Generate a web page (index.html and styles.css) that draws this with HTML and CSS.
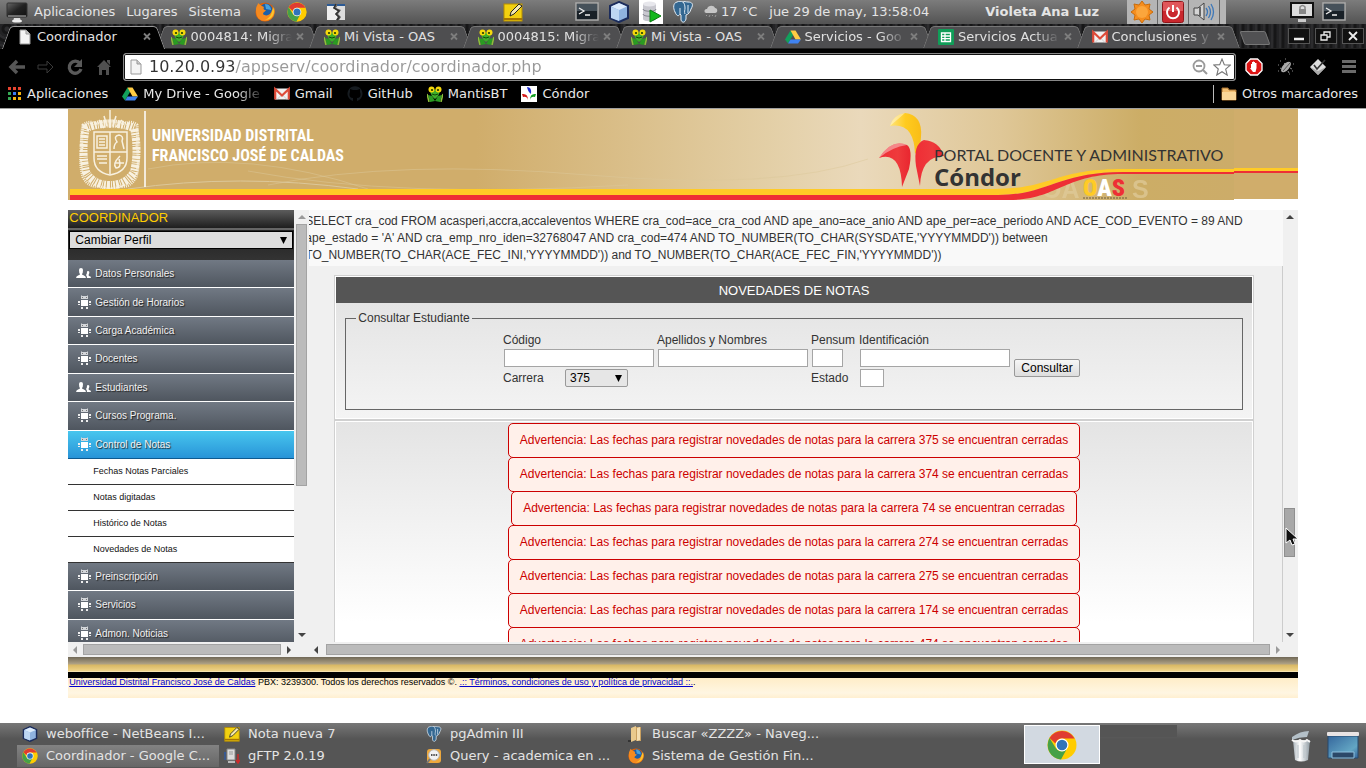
FILE: index.html
```html
<!DOCTYPE html>
<html lang="es">
<head>
<meta charset="utf-8">
<title>Coordinador</title>
<link rel="stylesheet" href="styles.css">
</head>
<body>
<svg class="defs" aria-hidden="true">
  <defs>
    <linearGradient id="scr" x1="0" y1="0" x2="1" y2="1"><stop offset="0" stop-color="#666"/><stop offset=".5" stop-color="#222"/><stop offset="1" stop-color="#111"/></linearGradient>
    <linearGradient id="banner" x1="0" y1="0" x2="1" y2="0"><stop offset="0" stop-color="#d0ad6b"/><stop offset=".35" stop-color="#d0ad6b"/><stop offset=".6" stop-color="#e3cfa6"/><stop offset=".68" stop-color="#ead9bb"/><stop offset=".8" stop-color="#dfc797"/><stop offset=".92" stop-color="#ccad66"/><stop offset="1" stop-color="#ccac69"/></linearGradient>
    <linearGradient id="petalY" x1="0" y1="0" x2="1" y2="0"><stop offset="0" stop-color="#ffe47a"/><stop offset=".5" stop-color="#ffcb1f"/><stop offset="1" stop-color="#f9bd17"/></linearGradient>
    <linearGradient id="petalR" x1="0" y1="0" x2="1" y2="0"><stop offset="0" stop-color="#ef2d35"/><stop offset=".6" stop-color="#ee3a3c"/><stop offset="1" stop-color="#e9262f"/></linearGradient>
    <linearGradient id="glass" x1="0" y1="0" x2="1" y2="1"><stop offset="0" stop-color="#35669c"/><stop offset=".7" stop-color="#63a6c4"/><stop offset="1" stop-color="#35669c"/></linearGradient>
    <linearGradient id="metal" x1="0" y1="0" x2="1" y2="0"><stop offset="0" stop-color="#aab4bb"/><stop offset=".4" stop-color="#fff"/><stop offset="1" stop-color="#8f9ba3"/></linearGradient>
  </defs>
  <symbol id="i-desk" viewBox="0 0 22 22"><rect x="1" y="2" width="20" height="14" rx="1" fill="url(#scr)" stroke="#333"/><path d="M2 15h18" stroke="#bbb"/><path d="M8 17h6l1 3H7z" fill="#ddd"/><ellipse cx="11" cy="20" rx="5" ry="1.5" fill="#eee"/></symbol>
  <symbol id="i-firefox" viewBox="0 0 20 20"><circle cx="10" cy="10" r="9.5" fill="#e66000"/><circle cx="11" cy="8" r="6.500" fill="#1d5fa8"/><path d="M10 2c4 0 6 3 6 6l-5-1z" fill="#48a0da"/><path d="M1 8C1 4 3 3 3 1c2 2 4 3 6 4-1 2 0 3 2 3-1 2-3 2-3 4 3 3 8 1 9-4 2-1 2-3 1-4 4 5 1 15-8 15C4 19 1 15 1 8z" fill="#f58a1f"/><path d="M18 5c3 6-1 13-8 13 5-2 7-6 8-13z" fill="#fcc62b"/></symbol>
  <symbol id="i-chrome" viewBox="0 0 30 30"><circle cx="15" cy="15" r="14.500" fill="#fc0"/><path d="M2.500 8A14.500 14.500 0 0 1 27.600 8.500H15a7 7 0 0 0-6.500 5z" fill="#e03c31"/><path d="M2.500 8A14.500 14.500 0 0 0 14 29.500l6-11a7 7 0 0 1-11 0z" fill="#46a147"/><circle cx="15" cy="15" r="6.500" fill="#fff"/><circle cx="15" cy="15" r="5.300" fill="#2f74ba"/></symbol>
  <symbol id="i-split" viewBox="0 0 18 18"><path d="M0 2h8L6 5l5 3-3 3 3 3-2 3H0z" fill="#eee"/><path d="M11 2h7v15h-6l2-3-3-3 3-4-5-2z" fill="#ddd"/><path d="M0 1h8v2H0zM10 1h8v2h-8z" fill="#2c5a94"/><path d="M9 1L7 5l5 3-3 3 3 3-2 3" fill="none" stroke="#333" stroke-width="1.500"/></symbol>
  <symbol id="i-note" viewBox="0 0 20 20"><rect x="1" y="2" width="18" height="17" fill="#f2d00f" stroke="#b58d00"/><path d="M1 17h18" stroke="#a87600" stroke-width="2"/><path d="M7 14l1-4 8-8 3 2-8 8z" fill="#f5e9b0" stroke="#222"/></symbol>
  <symbol id="i-term" viewBox="0 0 24 20"><rect x="1" y="1" width="22" height="17" fill="#182027" stroke="#aaa" stroke-width="1.500"/><path d="M2 2h20v7H2z" fill="#46515a"/><path d="M4 6l5 3-5 3M10 13h5" fill="none" stroke="#eee" stroke-width="1.300"/></symbol>
  <symbol id="i-cube" viewBox="0 0 22 22"><path d="M11 1l9 4v12l-9 4-9-4V5z" fill="#8fb3e0" stroke="#1b2c5c" stroke-width="2"/><path d="M3 5.500L11 9l8-3.500L11 2z" fill="#dcebfb"/><path d="M3 6l8 3v11l-8-3z" fill="#bdd6f2"/></symbol>
  <symbol id="i-db" viewBox="0 0 24 24"><path fill="#fff" d="M0 0h24v24H0z"/><path d="M4 4v15c0 3 13 3 13 0V4z" fill="#c8c8cf"/><ellipse cx="10.500" cy="4" rx="6.500" ry="2.500" fill="#e7e7ec"/><path d="M4 9c0 3 13 3 13 0M4 14c0 3 13 3 13 0" stroke="#85858f" fill="none"/><path d="M11 10l11 6-11 6z" fill="#12b81c" stroke="#087a10"/></symbol>
  <symbol id="i-pg" viewBox="0 0 22 22"><path d="M5 1C1 2 1 7 3 11c2 5 4 4 5 2l1 1v5c1 3 4 3 5-1v-4c3-1 4-3 5-6 3-5 1-7-3-7-2 0-4-1-5 0C9 0 7 0 5 1z" fill="#336791" stroke="#e4edf5"/><path d="M8 13V7M13 13c-1-2 0-4 0-6 0-3-1-5-2-6M16 4v8" stroke="#dce8f2" fill="none"/></symbol>
  <symbol id="i-cloud" viewBox="0 0 14 14"><path d="M2 8a2 2 0 0 1 1-4c1-4 7-4 8-1 3 0 3 5 0 5z" fill="#c6c6c6"/><path d="M3 10l-1 1M6 10l-1 2M9 10l-1 1M12 10l-1 2" stroke="#999"/></symbol>
  <symbol id="i-sun" viewBox="0 0 22 22"><path d="M11 0l3 4 5-1-1 5 4 3-4 3 1 5-5-1-3 4-3-4-5 1 1-5-4-3 4-3-1-5 5 1z" fill="#f58d1d" stroke="#c96c0a"/><circle cx="11" cy="11" r="6" fill="#fba63c"/></symbol>
  <symbol id="i-power" viewBox="0 0 22 22"><rect x=".5" y=".5" width="21" height="21" rx="2" fill="#c9272d" stroke="#8e1519"/><path d="M1 1h20v9H1z" fill="#e0565a"/><path d="M7.500 6.500a6 6 0 1 0 7 0M11 4v7" fill="none" stroke="#fff" stroke-width="2"/></symbol>
  <symbol id="i-vol" viewBox="0 0 22 22"><path d="M1 7h4l6-5v17l-6-5H1z" fill="#d5d5d5" stroke="#444"/><path d="M7 6v9" stroke="#666" stroke-width="2"/><path d="M13 7q3 4 0 8M15.500 5q4 6 0 12M18 3q5 8 0 16" fill="none" stroke="#3d77b8" stroke-width="1.300"/></symbol>
  <symbol id="i-lock" viewBox="0 0 24 22"><rect x="1" y="2" width="22" height="14" fill="#ddd" stroke="#111" stroke-width="2"/><path d="M9 8h7v5H9z" fill="#888"/><path d="M10 8V6q2.500-3 5 0v2" fill="none" stroke="#888" stroke-width="1.500"/><path d="M8 18h8v3H8z" fill="#ccc"/></symbol>
  <symbol id="i-page" viewBox="0 0 12 16"><path d="M1 1h6l4 4v10H1z" fill="#f4f4f4" stroke="#999"/><path d="M7 1v4h4" fill="#ccc" stroke="#999"/></symbol>
  <symbol id="i-mantis" viewBox="0 0 16 16"><path d="M1 9l4 1 3 5-5 1zM15 9l-4 1-3 5 5 1z" fill="#2a9b22"/><path d="M3 5q5-3 10 0-1 5-5 8-4-3-5-8z" fill="#3fae2a"/><path d="M0 8l2 8M16 8l-2 8" stroke="#8fc03b" stroke-width="1.500"/><circle cx="4.500" cy="3.500" r="3" fill="#f6d90c"/><circle cx="11.500" cy="3.500" r="3" fill="#f6d90c"/><circle cx="5" cy="4" r="1.100" fill="#1d3a00"/><circle cx="11" cy="4" r="1.100" fill="#1d3a00"/><path d="M5 8q3 2 6 0" stroke="#0d4a0a" fill="none"/></symbol>
  <symbol id="i-drive" viewBox="0 0 16 15"><path d="M5.500 1L0 10l3 4 5.300-9z" fill="#12a05c"/><path d="M5.500 1h5l5.500 9h-5.500z" fill="#fc4"/><path d="M5.500 10H16l-3 4H3z" fill="#3f82f0"/></symbol>
  <symbol id="i-sheet" viewBox="0 0 16 16"><rect width="16" height="16" rx="1" fill="#109d58"/><path d="M3.500 4h9v8.500h-9zM3.500 7h9M3.500 9.700h9M7 4v8.500" fill="none" stroke="#fff" stroke-width="1.300"/></symbol>
  <symbol id="i-gmail" viewBox="0 0 16 13"><path fill="#f1f1f1" d="M1 1h14v11H1z"/><path d="M3 12l5-5 5 5" fill="none" stroke="#ccc"/><path d="M1.200 12V1.500L8 8l6.800-6.500V12" fill="none" stroke="#dd4b39" stroke-width="2.200"/></symbol>
  <symbol id="i-apps" viewBox="0 0 14 14"><path d="M0 0h3v3H0zM5 0h3v3H5zM10 0h3v3h-3z" fill="#e8442f"/><path d="M0 5h3v3H0z" fill="#35a853"/><path d="M5 5h3v3H5z" fill="#3c7cf0"/><path d="M10 5h3v3h-3zM5 10h3v3H5zM10 10h3v3h-3z" fill="#f6b50c"/><path d="M0 10h3v3H0z" fill="#35a853"/></symbol>
  <symbol id="i-github" viewBox="0 0 16 16"><path d="M6 15v-3C2 12 2 8 3 6l0-3 3 1h4l3-1v3c1 2 1 6-3 6v3a7.500 7.500 0 1 0-4 0z" fill="#161b20"/></symbol>
  <symbol id="i-condor" viewBox="0 0 16 16"><path fill="#fff" d="M0 0h16v16H0z"/><path d="M6 1q5 0 4 7Q7 6 6 1z" fill="#1c2ad0"/><path d="M1 8q6-1 6 6Q6 10 2 11z" fill="#d41a1a"/><path d="M15 8q-6-1-6 6 1-4 5-3z" fill="#12a022"/></symbol>
  <symbol id="i-folder" viewBox="0 0 16 14"><path d="M1 1h6l1 2h7v10H1z" fill="#f3bf72" stroke="#a8712f"/><path d="M1 5h14v8H1z" fill="#fbd798"/></symbol>
  <symbol id="i-back" viewBox="0 0 18 18"><path d="M9 3L3 9l6 6M3 9h14" fill="none" stroke="#565656" stroke-width="3.500"/></symbol>
  <symbol id="i-fwd" viewBox="0 0 18 18"><path d="M1 7h9V3l6 6-6 6v-4H1z" fill="none" stroke="#3a3a3a"/></symbol>
  <symbol id="i-reload" viewBox="0 0 18 18"><path d="M14 5.500A6 6 0 1 0 15 11" fill="none" stroke="#5a5a5a" stroke-width="3.300"/><path d="M16 1v8H8z" fill="#5a5a5a"/></symbol>
  <symbol id="i-home" viewBox="0 0 16 18"><path d="M1 9l7-7 7 7h-2v8h-3v-5H6v5H3V9z" fill="#505050"/><path d="M11 2h3v5l-3-3z" fill="#505050"/></symbol>
  <symbol id="i-zoom" viewBox="0 0 16 16"><circle cx="7" cy="7" r="5.500" fill="none" stroke="#9a9a9a" stroke-width="1.800"/><path d="M4 7h6M11 11l4 4" stroke="#9a9a9a" stroke-width="2"/></symbol>
  <symbol id="i-star" viewBox="0 0 18 18"><path d="M9 1l2.300 5.700 6 .4-4.600 4 1.500 6L9 13.700 3.800 17l1.500-6-4.600-4 6-.4z" fill="none" stroke="#777" stroke-width="1.100"/></symbol>
  <symbol id="i-adblock" viewBox="0 0 18 18"><path d="M5.500 1h7L17 5.500v7L12.500 17h-7L1 12.500v-7z" fill="#dc1414" stroke="#fff" stroke-width="1.300"/><path d="M6 10V6h1V4h1v-.6h1V4h1v1h1.500v5l-1 4H8l-3-4z" fill="#fff"/></symbol>
  <symbol id="i-bug" viewBox="0 0 18 18"><ellipse cx="9" cy="9" rx="6.500" ry="3.200" fill="#aaa" transform="rotate(-48 9 9)"/><path d="M6 13l7-8" stroke="#555"/><path d="M3 10l2 1M7 5l1 1M11 13l1 2M13 10l2 1" stroke="#888"/><path d="M1 7h1M3 3h1M15 13h1M12 16h1M1 13h1M16 6h1M8 1h1" stroke="#888"/></symbol>
  <symbol id="i-check" viewBox="0 0 18 18"><path d="M9 1l8 8-8 8-8-8z" fill="#ddd"/><path d="M1 9l8 4 8-4-8 8z" fill="#aaa"/><path d="M5 7l3 4 8-9" fill="none" stroke="#333" stroke-width="1.600"/></symbol>
  <symbol id="i-menu" viewBox="0 0 14 16"><path d="M0 2.500h14M0 7.500h14M0 12.500h14" stroke="#6a6a6a" stroke-width="3"/></symbol>
  <symbol id="i-x" viewBox="0 0 8 8"><path d="M1 1l6 6M7 1L1 7" stroke="#7d7d7d" stroke-width="1.800"/></symbol>
  <symbol id="i-people" viewBox="0 0 15 13"><path d="M0 11q0-2 3-3 1 0 1-1-1-1-1-4 0-2 2-2t2 2q0 3-1 4 0 1 1 1 3 1 3 3z" fill="#fff"/><path d="M11 11h4q0-2-2-2-1-1 0-2 1-3-1-3-1 0-1 1 0 2-1 3 1 1 1 3z" fill="#fff"/></symbol>
  <symbol id="i-robot" viewBox="0 0 13 15"><path d="M3 0l1 1h5l1-1v4H3z" fill="#d3d6da"/><path d="M4 2h1v1H4zM8 2h1v1H8z" fill="#777"/><path d="M3 5h7v6H3z" fill="#fff"/><path d="M0 6h2v2H0zM0 9h2v1H0zM11 6h2v2h-2zM11 9h2v1h-2zM3 12h2v2H3zM8 12h2v2H8z" fill="#eee"/></symbol>
  <symbol id="i-ftp" viewBox="0 0 16 16"><path fill="#ddd" stroke="#888" d="M3 1h8v11H3z"/><path d="M5 4h4M5 6h4" stroke="#999"/><path d="M1 4v8M0 5h2" stroke="#34599a" stroke-width="1.500"/><path d="M14 6v8M12 12l2 3 2-3" stroke="#cc2a2a" stroke-width="1.500" fill="none"/><path d="M4 14h7" stroke="#bbb" stroke-width="2"/></symbol>
  <symbol id="i-sql" viewBox="0 0 16 16"><path d="M1 4q0-3 3-3h8q3 0 3 3v8q0 3-3 3H1z" fill="#eda83d"/><circle cx="8" cy="7" r="5.300" fill="#f3f3f3" stroke="#bbb"/><path d="M4 11l-3 4" stroke="#777" stroke-width="2"/><path d="M5 7h1.500M7.300 7h1.500M9.700 7h1.500" stroke="#555" stroke-width="2"/></symbol>
  <symbol id="i-files" viewBox="0 0 16 16"><path d="M3 2l5-2v14l-5 2z" fill="#e9c98c"/><path d="M8 1h5v14H8z" fill="#c9a060"/><path d="M9 2l3-1v13l-3 1z" fill="#f4deb0"/><path d="M0 14h3v2H0z" fill="#333"/></symbol>
  <symbol id="i-trash" viewBox="0 0 22 32"><path d="M3 10h17l-2 20q-7 3-13 0z" fill="url(#metal)"/><path d="M2 7q8-6 17-6l-2 6q-8 0-15 3z" fill="#b4c0c8"/><path d="M2 10q4 3 8 0 4 3 7 0l3 2" fill="none" stroke="#f5f5f5" stroke-width="2"/><path d="M8 15v13M14 15v13" stroke="#b9c3c9"/></symbol>
  <symbol id="i-show" viewBox="0 0 32 28"><path fill="url(#glass)" stroke="#27486d" d="M1 4h30v22H1z"/><rect width="32" height="4" rx="1" fill="#e9e4e4"/><path d="M5 20h22v6H5z" fill="#2b4868" stroke="#8fc0dd"/></symbol>
</svg>

<header class="panel">
  <svg class="ic22"><use href="#i-desk"/></svg>
  <nav class="panel-menu"><a href="#">Aplicaciones</a><a href="#">Lugares</a><a href="#">Sistema</a></nav>
  <div class="launchers"><svg class="ic20"><use href="#i-firefox"/></svg><svg class="ic20"><use href="#i-chrome"/></svg><svg class="ic18"><use href="#i-split"/></svg></div>
  <svg class="ic20 note"><use href="#i-note"/></svg>
  <div class="apps"><svg class="ic24 short"><use href="#i-term"/></svg><svg class="ic22"><use href="#i-cube"/></svg><svg class="ic24"><use href="#i-db"/></svg><svg class="ic22"><use href="#i-pg"/></svg></div>
  <svg class="ic14 weather"><use href="#i-cloud"/></svg><span>17 °C</span>
  <time>jue 29 de may, 13:58:04</time>
  <strong>Violeta Ana Luz</strong>
  <div class="tray"><span><svg class="ic22"><use href="#i-sun"/></svg></span><span><svg class="ic22"><use href="#i-power"/></svg></span><span><svg class="ic22"><use href="#i-vol"/></svg></span></div>
  <div class="panel-end"><svg class="ic24"><use href="#i-lock"/></svg><svg class="ic24 short"><use href="#i-term"/></svg></div>
</header>

<section class="chrome">
  <div class="strip">
    <div class="tabs">
      <div class="tab active"><svg class="ic16"><use href="#i-page"/></svg><a href="#">Coordinador</a><button aria-label="Cerrar"><svg><use href="#i-x"/></svg></button></div>
      <div class="tab"><svg class="ic16"><use href="#i-mantis"/></svg><a href="#">0004814: Migra</a><button aria-label="Cerrar"><svg><use href="#i-x"/></svg></button></div>
      <div class="tab"><svg class="ic16"><use href="#i-mantis"/></svg><a href="#">Mi Vista - OAS</a><button aria-label="Cerrar"><svg><use href="#i-x"/></svg></button></div>
      <div class="tab"><svg class="ic16"><use href="#i-mantis"/></svg><a href="#">0004815: Migra</a><button aria-label="Cerrar"><svg><use href="#i-x"/></svg></button></div>
      <div class="tab"><svg class="ic16"><use href="#i-mantis"/></svg><a href="#">Mi Vista - OAS</a><button aria-label="Cerrar"><svg><use href="#i-x"/></svg></button></div>
      <div class="tab"><svg class="ic16"><use href="#i-drive"/></svg><a href="#">Servicios - Goo</a><button aria-label="Cerrar"><svg><use href="#i-x"/></svg></button></div>
      <div class="tab"><svg class="ic16"><use href="#i-sheet"/></svg><a href="#">Servicios Actua</a><button aria-label="Cerrar"><svg><use href="#i-x"/></svg></button></div>
      <div class="tab"><svg class="ic16"><use href="#i-gmail"/></svg><a href="#">Conclusiones y</a><button aria-label="Cerrar"><svg><use href="#i-x"/></svg></button></div>
    </div>
    <button class="newtab" aria-label="Nueva pestaña"></button>
    <div class="winbtns">
      <button aria-label="Minimizar"><svg viewBox="0 0 20 14"><path d="M5 10h10" stroke="#eee" stroke-width="2.500"/></svg></button>
      <button aria-label="Restaurar"><svg viewBox="0 0 20 14"><path d="M5 6h6v5H5zM8 6V3h6v5h-3" fill="none" stroke="#eee" stroke-width="1.300"/></svg></button>
      <button aria-label="Cerrar"><svg viewBox="0 0 20 14"><path d="M6 3l8 8M14 3l-8 8" stroke="#eee" stroke-width="1.800"/></svg></button>
    </div>
  </div>
  <div class="toolbar">
    <div class="navbtns"><button aria-label="Atrás"><svg><use href="#i-back"/></svg></button><button aria-label="Adelante"><svg><use href="#i-fwd"/></svg></button><button aria-label="Recargar"><svg><use href="#i-reload"/></svg></button><button aria-label="Inicio"><svg><use href="#i-home"/></svg></button></div>
    <div class="omnibox"><svg class="ic16"><use href="#i-page"/></svg><input type="text" aria-label="Dirección" value="10.20.0.93/appserv/coordinador/coordinador.php"><svg class="ic16"><use href="#i-zoom"/></svg><svg class="ic18"><use href="#i-star"/></svg></div>
    <div class="exts"><svg class="ic18"><use href="#i-adblock"/></svg><svg class="ic18"><use href="#i-bug"/></svg><svg class="ic18"><use href="#i-check"/></svg><svg class="ic16"><use href="#i-menu"/></svg></div>
  </div>
  <nav class="bookmarks">
    <a href="#"><svg class="ic14"><use href="#i-apps"/></svg>Aplicaciones</a>
    <a href="#" class="drive"><svg class="ic16"><use href="#i-drive"/></svg><span class="fade">My Drive - Google</span></a>
    <a href="#"><svg class="ic16"><use href="#i-gmail"/></svg>Gmail</a>
    <a href="#"><svg class="ic16"><use href="#i-github"/></svg>GitHub</a>
    <a href="#"><svg class="ic16"><use href="#i-mantis"/></svg>MantisBT</a>
    <a href="#"><svg class="ic16"><use href="#i-condor"/></svg>Cóndor</a>
    <a href="#" class="others"><svg class="ic16"><use href="#i-folder"/></svg>Otros marcadores</a>
  </nav>
</section>

<main class="viewport">
  <div class="site">
    <div class="banner">
      <svg class="banner-img" viewBox="0 0 1166 91" role="img" aria-label="Universidad Distrital Francisco José de Caldas">
        <rect width="1166" height="91" fill="url(#banner)"/>
        <g fill="none" stroke="#dcc799" stroke-width="1"><path d="M60 80Q170 64 290 80"/><path d="M80 60Q180 40 300 80" opacity=".5"/><path d="M200 76Q330 50 520 66T800 50" opacity=".5"/><path d="M180 62Q330 90 560 76" opacity=".5"/></g>
        <g fill="none" stroke="#f8f1e0">
          <path d="M18 19q24-9 48 0 5 22 0 44-8 13-24 13-17 0-24-13-5-22 0-44z" stroke-width="8" stroke-dasharray="2 1 1 1 3 1"/>
          <path d="M15 16q7-5 12-1 15-6 30 0 6-4 12 1 1 12 0 22 3 16-1 30-6 11-15 9-11 6-22 0-10 2-16-9-4-14-1-30-1-12 1-22z" stroke-width="3" stroke-dasharray="1 1"/>
          <path d="M42 1v18M36 7l3 10M48 7l-3 10M31 11l5 8M54 11l-6 7" stroke-width="1.500"/>
          <path d="M26 23h33v26q0 14-17 17-16-3-16-17zM26 43h33M42 23v42" fill="#d0ad6b" stroke-width="1.500"/>
          <path d="M29 27h10v12H29zM31 30h6M31 33h6M31 36h6M46 40q0-5 3-7-4-6 2-7 5 1 3 6l2 8M29 47h10M29 50h10M31 54h8M52 47q-8 8-4 12 6 0 3-9M47 54h9" stroke-width="1.500"/>
        </g>
        <path d="M77 2v76" stroke="#fff" stroke-width="1.500"/>
        <text class="uni" x="84" y="32">UNIVERSIDAD DISTRITAL</text>
        <text class="uni" x="84" y="52">FRANCISCO JOSÉ DE CALDAS</text>
        <path d="M822 17q3-11 15-13 18 2 16 24 0 9-6 17-1-32-25-28z" fill="url(#petalY)"/>
        <path d="M811 49q13-20 28-13 6 4 2 24l-7 18q-1-36-23-29z" fill="url(#petalR)"/>
        <path d="M876 47q-5-15-20-16-11 4-8 26l4 20q1-30 24-30z" fill="url(#petalR)"/>
        <path d="M822 17q3-11 15-13-8 7-15 13M811 49q13-20 28-13-15 2-28 13M876 38q-12-10-22-5 10-6 22 5" fill="#fff" opacity=".4"/>
        <text class="portal" x="866" y="52">PORTAL DOCENTE Y ADMINISTRATIVO</text>
        <text class="condor" x="866" y="77">Cóndor</text>
        <text class="oas ghost" x="974" y="89">OA</text><text class="oas ghost" x="1064" y="89">S</text>
        <path d="M2 80h923c60 0 60-20 130-20h111v3h-111c-65 0-75 23-125 23H2z" fill="#ffcb26"/>
        <path d="M2 86h928c50 0 60-23 125-23h111v2h-111c-60 0-65 26-115 26H2z" fill="#ee2f35"/>
        <text class="oas front" x="1015" y="87"><tspan fill="#ffcb26">O</tspan><tspan fill="#fff">A</tspan><tspan fill="#ee2f35">S</tspan></text>
        <path d="M1015 89h44" stroke="#6b5a3a" stroke-dasharray="2 1"/>
      </svg>
    </div>

    <div class="frames">
      <aside class="frame side">
        <div class="view">
          <h2>COORDINADOR</h2>
          <div class="profile"><select aria-label="Perfil"><option>Cambiar Perfil</option></select></div>
          <nav class="menu">
            <a href="#"><svg class="people"><use href="#i-people"/></svg>Datos Personales</a>
            <a href="#"><svg><use href="#i-robot"/></svg>Gestión de Horarios</a>
            <a href="#"><svg><use href="#i-robot"/></svg>Carga Académica</a>
            <a href="#"><svg><use href="#i-robot"/></svg>Docentes</a>
            <a href="#"><svg class="people"><use href="#i-people"/></svg>Estudiantes</a>
            <a href="#"><svg><use href="#i-robot"/></svg>Cursos Programa.</a>
            <a href="#" class="current"><svg><use href="#i-robot"/></svg>Control de Notas</a>
          </nav>
          <nav class="submenu"><a href="#">Fechas Notas Parciales</a><a href="#">Notas digitadas</a><a href="#">Histórico de Notas</a><a href="#">Novedades de Notas</a></nav>
          <nav class="menu rest">
            <a href="#"><svg><use href="#i-robot"/></svg>Preinscripción</a>
            <a href="#"><svg><use href="#i-robot"/></svg>Servicios</a>
            <a href="#"><svg><use href="#i-robot"/></svg>Admon. Noticias</a>
          </nav>
        </div>
        <div class="vbar"><i class="up off"></i><b class="thumb-top"></b><i class="down"></i></div>
        <div class="hbar"><i class="left off"></i><b></b><i class="right"></i></div>
      </aside>

      <section class="frame content">
        <div class="view">
          <p class="sql">SELECT cra_cod FROM acasperi,accra,accaleventos WHERE cra_cod=ace_cra_cod AND ape_ano=ace_anio AND ape_per=ace_periodo AND ACE_COD_EVENTO = 89 AND<br>ape_estado = 'A' AND cra_emp_nro_iden=32768047 AND cra_cod=474 AND TO_NUMBER(TO_CHAR(SYSDATE,'YYYYMMDD')) between<br>TO_NUMBER(TO_CHAR(ACE_FEC_INI,'YYYYMMDD')) and TO_NUMBER(TO_CHAR(ACE_FEC_FIN,'YYYYMMDD'))</p>
          <div class="body">
            <div class="box">
              <h1>NOVEDADES DE NOTAS</h1>
              <form class="query">
                <fieldset>
                  <legend>Consultar Estudiante</legend>
                  <div class="fields">
                    <div class="field"><label for="cod">Código</label><input id="cod" type="text"></div>
                    <div class="field"><label for="nom">Apellidos y Nombres</label><input id="nom" type="text"></div>
                    <div class="field"><label for="pen">Pensum</label><input id="pen" type="text" class="w31"></div>
                    <div class="field"><label for="ide">Identificación</label><input id="ide" type="text"></div>
                    <button type="button">Consultar</button>
                    <div class="carrera"><label for="car">Carrera</label><select id="car"><option>375</option></select></div>
                    <label class="estado" for="est">Estado</label><input id="est" type="text" class="w24">
                  </div>
                </fieldset>
              </form>
            </div>
            <div class="box results">
              <div class="warnings">
                <p>Advertencia: Las fechas para registrar novedades de notas para la carrera 375 se encuentran cerradas</p>
                <p>Advertencia: Las fechas para registrar novedades de notas para la carrera 374 se encuentran cerradas</p>
                <p>Advertencia: Las fechas para registrar novedades de notas para la carrera 74 se encuentran cerradas</p>
                <p>Advertencia: Las fechas para registrar novedades de notas para la carrera 274 se encuentran cerradas</p>
                <p>Advertencia: Las fechas para registrar novedades de notas para la carrera 275 se encuentran cerradas</p>
                <p>Advertencia: Las fechas para registrar novedades de notas para la carrera 174 se encuentran cerradas</p>
                <p>Advertencia: Las fechas para registrar novedades de notas para la carrera 474 se encuentran cerradas</p>
              </div>
            </div>
          </div>
        </div>
        <div class="vbar"><i class="up"></i><b class="thumb-low"><svg class="cursor" viewBox="0 0 14 20"><path d="M1 1v15l4-3 2 5 3-1-2-5h5z" fill="#111" stroke="#fff"/></svg></b><i class="down"></i></div>
        <div class="hbar"><i class="left"></i><b></b><i class="right off"></i></div>
      </section>
    </div>
    <footer class="foot">
      <div class="gold"></div>
      <p><a href="#">Universidad Distrital Francisco José de Caldas</a> PBX: 3239300. Todos los derechos reservados ©. <a href="#">.:: Términos, condiciones de uso y política de privacidad ::.</a>.</p>
    </footer>
  </div>
</main>

<footer class="taskbar">
  <div class="tasks">
    <button><svg><use href="#i-cube"/></svg>weboffice - NetBeans I...</button>
    <button class="on"><svg><use href="#i-chrome"/></svg>Coordinador - Google C...</button>
    <button><svg><use href="#i-note"/></svg>Nota nueva 7</button>
    <button><svg><use href="#i-ftp"/></svg>gFTP 2.0.19</button>
    <button><svg><use href="#i-pg"/></svg>pgAdmin III</button>
    <button><svg><use href="#i-sql"/></svg>Query - academica en ...</button>
    <button><svg><use href="#i-files"/></svg>Buscar «ZZZZ» - Naveg...</button>
    <button><svg><use href="#i-firefox"/></svg>Sistema de Gestión Fin...</button>
  </div>
  <div class="pager"><div class="desk1"><svg><use href="#i-chrome"/></svg></div><div class="desk2"></div></div>
  <div class="task-end"><svg class="trash"><use href="#i-trash"/></svg><svg class="show"><use href="#i-show"/></svg></div>
</footer>
</body>
</html>
```
FILE: styles.css
```css
* { box-sizing: border-box; }
body {
  margin: 0;
  height: 100vh;
  display: flex;
  flex-direction: column;
  overflow: hidden;
  background: #fff;
  font: 12px/17px "Liberation Sans", Arial, sans-serif;
  color: #333;
}
button, input, select { font: inherit; margin: 0; }
button { background: none; border: 0; padding: 0; color: inherit; }
svg { display: block; flex: none; }
.defs { position: absolute; width: 0; height: 0; }
.ic14 { width: 14px; height: 14px; }
.ic16 { width: 16px; height: 16px; }
.ic18 { width: 18px; height: 18px; }
.ic20 { width: 20px; height: 20px; }
.ic22 { width: 22px; height: 22px; }
.ic24 { width: 24px; height: 24px; }
.short { height: 20px; }

/* Desktop panel */
.panel {
  flex: none;
  height: 24px;
  display: flex;
  align-items: center;
  padding: 0 20px 0 6px;
  background: linear-gradient(#7c7c7c, #535353);
  color: #e4e4e4;
  font: 13px/22px "DejaVu Sans", sans-serif;
  white-space: nowrap;
}
.panel a { color: inherit; text-decoration: none; }
.panel-menu { display: flex; gap: 11px; margin-left: 6px; width: 206px; }
.launchers { display: flex; gap: 12px; margin-left: 15px; align-items: center; width: 91px; }
.launchers .ic18 { margin-left: 8px; }
.note { margin-left: 157px; }
.apps { display: flex; align-items: center; gap: 9px; margin-left: 52px; }
.weather { margin: 0 3px 0 10px; }
.panel time { margin-left: 12px; width: 160px; }
.panel strong { margin-left: 56px; width: 119px; }
.tray { display: flex; height: 24px; margin-left: 23px; background: #b5b5b5; width: 99px; }
.tray span { display: flex; align-items: center; justify-content: center; width: 31px; border-right: 1px solid #666; }
.panel-end { display: flex; align-items: center; gap: 8px; margin-left: auto; }

/* Browser window */
.chrome {
  flex: none;
  background: #000;
  color: #e8e8e8;
  font: 13px/18px "DejaVu Sans", sans-serif;
  border-bottom: 1px solid #9f9f9f;
}
.chrome a { color: inherit; text-decoration: none; white-space: nowrap; }
.strip {
  display: flex;
  height: 25px;
  padding: 1px 2px 0 4px;
  background: repeating-radial-gradient(circle at 7px 5px, #2c2c2e 0 2px, #161617 3px 5px, #232325 6px 8px);
  border-bottom: 1px solid #222;
}
.tabs { flex: 0 1 1228px; display: flex; min-width: 0; }
.tab {
  flex: 1 1 0;
  min-width: 0;
  position: relative;
  display: flex;
  align-items: center;
  gap: 4px;
  padding: 0 7px 0 13px;
  color: #e0e0e0;
  isolation: isolate;
}
.tab::before, .tab::after {
  content: "";
  position: absolute;
  z-index: -1;
  top: 1px;
  bottom: 0;
  background: #4e4e50;
  border-top: 1px solid #777;
}
.tab::before { left: 2px; width: 60%; border-left: 1px solid #777; border-radius: 4px 0 0; transform: skewX(-20deg); }
.tab::after { right: -4px; width: 60%; border-right: 1px solid #777; border-radius: 0 4px 0 0; transform: skewX(20deg); }
.active { z-index: 2; }
.active::before, .active::after { background: #000; border-color: #999; bottom: -1px; }
.tab a { flex: 1; min-width: 0; overflow: hidden; mask-image: linear-gradient(to right, #000 75%, transparent); }
.tab:nth-child(1) a, .tab:nth-child(3) a, .tab:nth-child(5) a { mask-image: none; }
.tab button svg { width: 8px; height: 9px; }
.newtab { width: 26px; height: 14px; margin: 6px 0 0 10px; background: #515153; border: 1px solid #777; border-radius: 2px; transform: skewX(20deg); }
.winbtns { display: flex; gap: 5px; margin: 3px 0 0 auto; }
.winbtns button { border: 1px solid #555; background: #111; width: 22px; height: 16px; }
.winbtns svg { width: 20px; height: 14px; }

.toolbar { display: flex; align-items: center; height: 35px; padding: 0 9px 0 8px; gap: 9px; }
.navbtns { display: flex; gap: 11px; width: 106px; }
.navbtns svg { width: 18px; height: 18px; }
.omnibox {
  flex: 1;
  display: flex;
  align-items: center;
  gap: 5px;
  height: 28px;
  padding: 0 4px;
  background: #fff;
  border: 1px solid #888;
  border-radius: 3px;
  box-shadow: inset 0 0 0 1px #111;
}
.omnibox input {
  flex: 1;
  min-width: 0;
  border: 0;
  padding: 0;
  outline: 0;
  font: 16px/20px "DejaVu Sans", sans-serif;
  color: transparent;
  background: linear-gradient(to right, #333 86px, #999 86px);
  -webkit-background-clip: text;
  background-clip: text;
}
.exts { display: flex; align-items: center; gap: 14px; }
.bookmarks { display: flex; align-items: center; height: 24px; padding: 0 8px 4px; gap: 14px; }
.bookmarks a { display: flex; align-items: center; gap: 5px; }
.fade { mask-image: linear-gradient(to right, #000 80%, rgba(0,0,0,.2)); }
.others { margin-left: auto; padding-left: 7px; border-left: 1px solid #bbb; }

/* Web page */
.viewport { flex: 1; min-height: 0; overflow: hidden; background: #fff; }
.site { width: 90%; margin: 0 auto; }
.banner {
  height: 90px;
  background: linear-gradient(#d0ad6b 59px, #ffcb26 59px 62px, #ee2f35 62px 64px, #d0ad6b 64px);
}
.banner-img { width: 1166px; height: 91px; }
.uni { font: bold 16px "Liberation Sans Narrow", "Roboto Condensed", "Open Sans Condensed", sans-serif; fill: #fff; }
.portal { font: 16px Lato, sans-serif; fill: #333; }
.condor { font: bold 24px "Open Sans", sans-serif; fill: #333; }
.oas { font: bold 25px "Liberation Sans", sans-serif; }
.oas.front { font: 900 24px "Liberation Sans Narrow", "Roboto Condensed", "Open Sans Condensed", sans-serif; }
.ghost { fill: #e0cc9c; opacity: .7; }

.frames { display: flex; height: 447px; margin-top: 11px; }
.frame { display: grid; grid-template: minmax(0, 1fr) 15px / minmax(0, 1fr) 15px; background: #f0f0f0; }
.side { flex: 0 0 241px; }
.content { flex: 1; min-width: 0; }
.view { overflow: hidden; }
.side .view { background: #333; }
.side h2 {
  margin: 0;
  height: 20px;
  padding: 0 1px;
  font: 13px/16px "Liberation Sans", sans-serif;
  color: #fc0;
  background: linear-gradient(#5c5c5c, #1e1e1e 18px, #666 18px);
}
.profile { height: 30px; padding: 1px; background: linear-gradient(#222, #333); }
.profile select, #car {
  appearance: none;
  height: 18px;
  color: #000;
  background: url("data:image/svg+xml,%3Csvg xmlns='http://www.w3.org/2000/svg' width='7' height='7'%3E%3Cpath d='M0 0h7L3.5 7z'/%3E%3C/svg%3E") right 5px center no-repeat #ddd;
}
.profile select { width: 100%; border: 1px solid #000; border-radius: 0; padding: 0 5px; }
.menu { display: grid; grid-auto-rows: 1fr; height: 199px; font-size: 10px; }
.menu.rest { height: 85px; }
.menu a {
  display: flex;
  align-items: center;
  gap: 4px;
  padding-left: 10px;
  color: #f2f2f2;
  text-decoration: none;
  text-shadow: 1px 1px 1px #222;
  background: linear-gradient(#717984, #4f565f);
  border-bottom: 1px solid #fff;
}
.menu svg { width: 13px; height: 15px; }
.menu .people { width: 15px; height: 13px; margin-left: -2px; }
.menu .current { background: linear-gradient(#48c6ee, #2894d8); border-bottom-color: #0e5a90; }
.submenu { font-size: 9px; }
.submenu a {
  display: block;
  height: 26px;
  padding-left: 25px;
  line-height: 25px;
  color: #111;
  text-decoration: none;
  background: #fff;
  border-bottom: 1px solid #333;
}

/* Scroll bars */
.vbar { display: flex; flex-direction: column; align-items: center; justify-content: space-between; padding: 5px 0; position: relative; }
.hbar { grid-column: 1 / -1; display: flex; align-items: center; padding: 0 18px 0 5px; gap: 6px; }
.hbar b { flex: 1; height: 11px; }
.vbar b { width: 11px; margin-left: -1px; }
.vbar b, .hbar b { background: #bbb; border: 1px solid #a3a3a3; }
.content .vbar b { background: #a8a8a8; border-color: #8f8f8f; }
.vbar .thumb-top { height: 262px; margin-bottom: auto; margin-top: 5px; }
.vbar .thumb-low { height: 49px; margin-top: auto; margin-bottom: 76px; position: relative; }
.vbar i, .hbar i { width: 0; height: 0; border: 4px solid transparent; }
.up { border-top: 0 !important; border-bottom-color: #444 !important; }
.down { border-bottom: 0 !important; border-top-color: #444 !important; }
.left { border-left: 0 !important; border-right-color: #444 !important; }
.right { border-right: 0 !important; border-left-color: #444 !important; }
.off { opacity: .5; }
.content .hbar b { margin-left: 2px; }
.cursor { position: absolute; left: 0; top: 18px; width: 14px; height: 20px; }

/* Content frame */
.sql { margin: 0 0 0 -4px; padding: 3px 0 2px; background: #f9f9f9; white-space: nowrap; }
.body { padding: 9px 28px 0 25px; border-right: 1px solid #ccc; }
.box { border: 1px solid #d0d0d0; padding: 1px; background: #fff; }
.box h1 { margin: 0; padding-top: 1px; background: #555; color: #fff; font: 13px/25px "Liberation Sans", sans-serif; text-align: center; }
.query { padding: 7px 9px 8px; background: linear-gradient(#e4e4e4, #f4f4f4); }
fieldset { margin: 0; padding: 4px 10px 20px; border: 1px solid #666; }
legend { padding: 0 2px; }
.fields {
  display: grid;
  grid-template: 38px 20px / 154px 154px 48px 154px 67px;
  justify-content: center;
  padding-right: 5px;
}
.field { display: flex; flex-direction: column; }
.fields label { line-height: 18px; }
.fields input { width: 150px; height: 18px; margin-left: 1px; border: 1px solid #a5a5a5; background: #fff; padding: 1px; }
.fields .w31 { width: 31px; }
.fields .w24 { width: 24px; }
.fields button, #car { border: 1px solid #999; border-radius: 2px; color: #000; }
.fields button { grid-row: 1 / 3; grid-column: 5; align-self: center; justify-self: end; width: 66px; height: 18px; margin-top: 16px; line-height: 16px; background: linear-gradient(#f6f6f6, #ddd); }
.carrera { grid-row: 2; grid-column: 1 / 3; display: flex; }
.carrera label { width: 62px; }
#car { width: 63px; padding: 0 4px; background-color: #e6e6e6; }
.estado { grid-row: 2; grid-column: 3; }
.results { border-top-width: 2px; margin-top: -1px; min-height: 300px; background: linear-gradient(#e4e4e4, #fff 200px) content-box, #fff; }
.warnings { display: flex; flex-direction: column; align-items: center; padding-top: 1px; }
.warnings p { margin: 0 0 -1px; padding: 8px 11px; height: 35px; border: 1px solid #c00; border-radius: 5px; background: #fff0ea; color: #c00; white-space: nowrap; }

.gold { height: 21px; background: linear-gradient(#706857, #b0a285 7px, #d8b763 8px, #f0d48a 14px, #fff3d4 15px, #000 15px); }
.foot p { margin: 0; padding: 0 1px; height: 20px; font-size: 9px; line-height: 9px; color: #000; background: linear-gradient(#ffedc8, #fff6e2 15px, #ffefd0); white-space: nowrap; }
.foot a { color: #00c; }

/* Task bar */
.taskbar {
  flex: none;
  height: 45px;
  display: flex;
  padding: 0 7px 0 17px;
  background: linear-gradient(#777, #555 16px);
  color: #e4e4e4;
  font: 13px/20px "DejaVu Sans", sans-serif;
}
.tasks { display: grid; grid-template: 22px 22px / repeat(4, 202px); grid-auto-flow: column; }
.tasks button { display: flex; align-items: center; gap: 8px; padding-left: 5px; white-space: nowrap; }
.tasks svg { width: 16px; height: 16px; }
.tasks .on { background: linear-gradient(#828282, #666); }
.pager { display: flex; margin: 2px 0 0 199px; }
.desk1 { display: flex; align-items: center; justify-content: center; width: 76px; height: 39px; background: #d2d9e1; border: 1px solid #fff; }
.desk1 svg { width: 30px; height: 30px; }
.desk2 { width: 77px; height: 12px; background: #555; }
.task-end { display: flex; align-items: center; gap: 15px; margin-left: auto; }
.trash { width: 22px; height: 32px; }
.show { width: 32px; height: 28px; }
```
